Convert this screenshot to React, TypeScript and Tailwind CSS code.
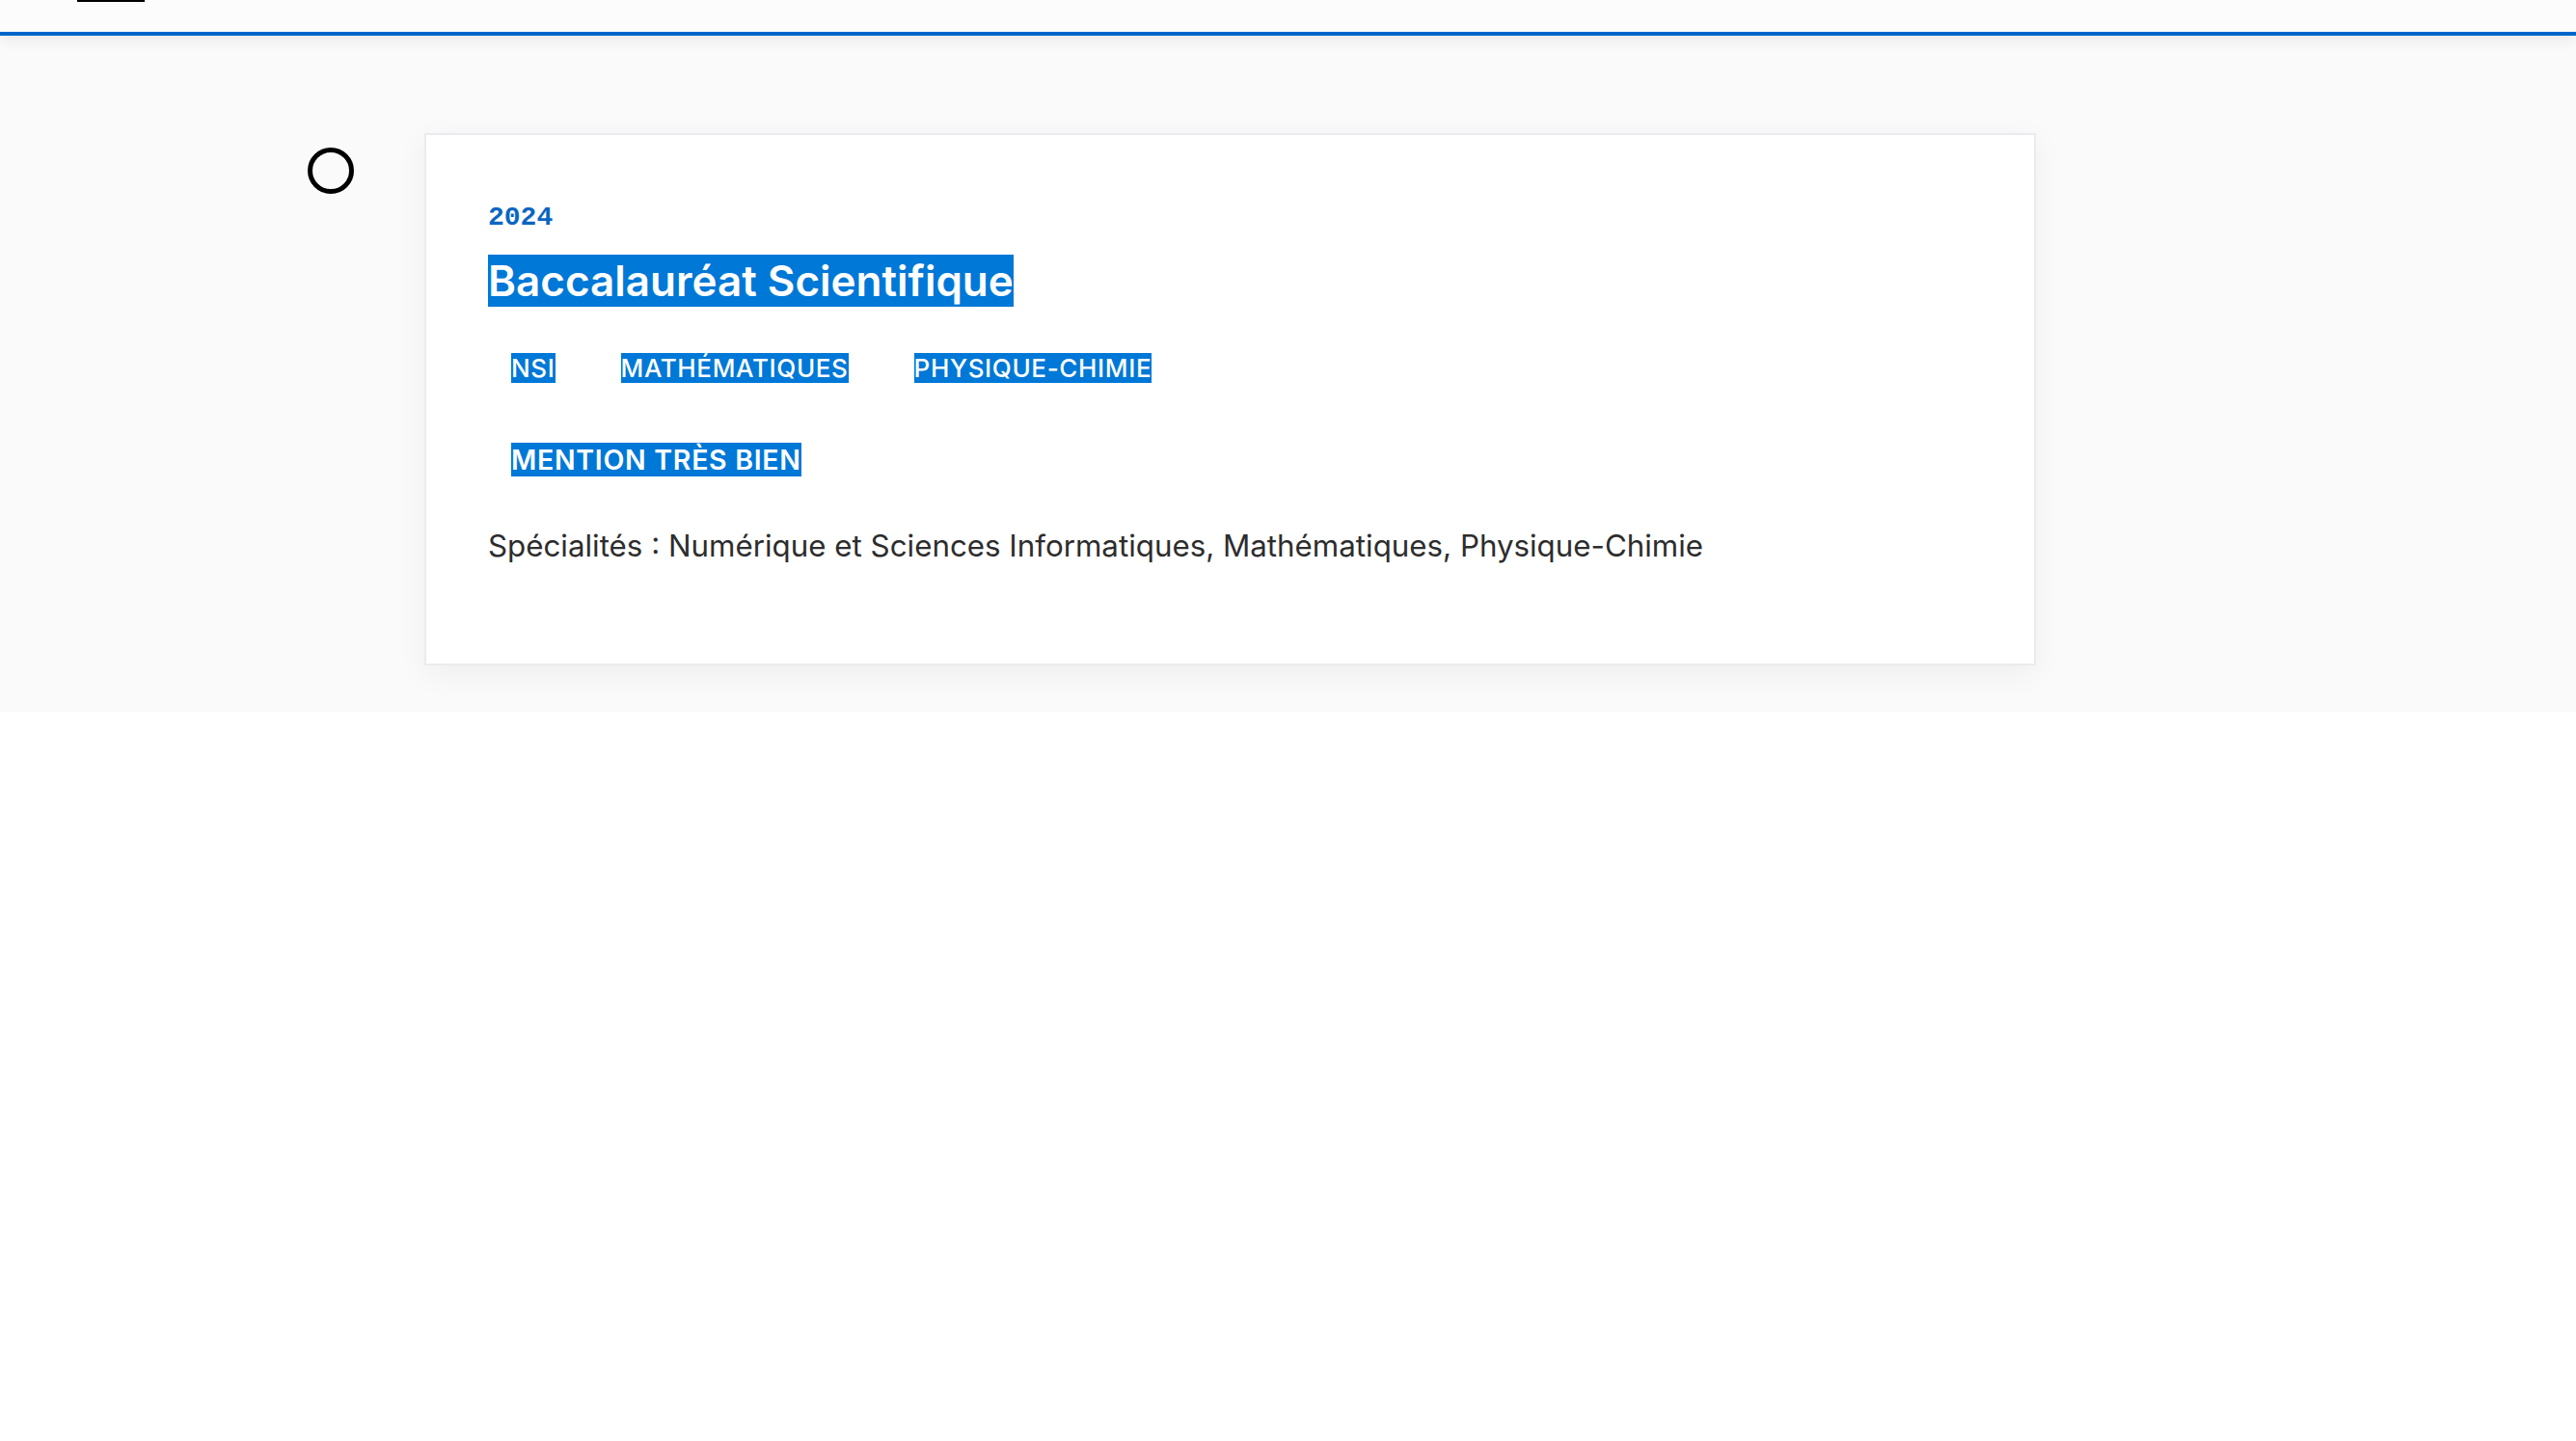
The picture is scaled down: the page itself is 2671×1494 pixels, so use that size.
export default function App() {
  const tags = ['NSI', 'MATHÉMATIQUES', 'PHYSIQUE-CHIMIE']

  return (
    <div className="min-h-screen bg-white font-['Inter',sans-serif]">
      {/* Header (scrolled, only its bottom edge shows) */}
      <header className="relative z-10 h-[37px] bg-[#fcfcfc] border-b-4 border-[#0066cc] shadow-[0_6px_14px_rgba(0,0,0,0.06)]">
        <div className="ml-[80px] w-[70px] h-[2px] bg-black" />
      </header>

      {/* Timeline */}
      <section className="bg-[#fafafa] pt-[101px] pb-[48px]">
        <div className="flex items-start pl-[319px] gap-[73px]">
          <div className="mt-[15px] w-12 h-12 shrink-0 rounded-full border-[5px] border-black" />

          <article className="w-[1671px] bg-white border-2 border-[#ebebef] shadow-[0_8px_30px_rgba(0,0,0,0.05)] px-16 pt-[70px] pb-[97px]">
            <div className="font-['Liberation_Mono',monospace] font-bold text-[28px] leading-[32px] text-[#0a66c2]">
              2024
            </div>

            <h3 className="mt-[23px] text-[44px] leading-[53px] font-semibold">
              <span className="bg-[#0078d7] text-white">Baccalauréat Scientifique</span>
            </h3>

            <div className="mt-[48px] flex gap-5">
              {tags.map((tag) => (
                <span key={tag} className="px-6">
                  <span className="inline-block bg-[#0078d7] text-white text-[26px] leading-[31px] font-medium tracking-wide">
                    {tag}
                  </span>
                </span>
              ))}
            </div>

            <div className="mt-[62px] px-6">
              <span className="inline-block bg-[#0078d7] text-white text-[28.5px] leading-[35px] font-semibold tracking-wide">
                MENTION TRÈS BIEN
              </span>
            </div>

            <p className="mt-[47px] text-[31.3px] leading-[1.6] text-[#2d2d2d]">
              Spécialités : Numérique et Sciences Informatiques, Mathématiques, Physique-Chimie
            </p>
          </article>
        </div>
      </section>
    </div>
  )
}
